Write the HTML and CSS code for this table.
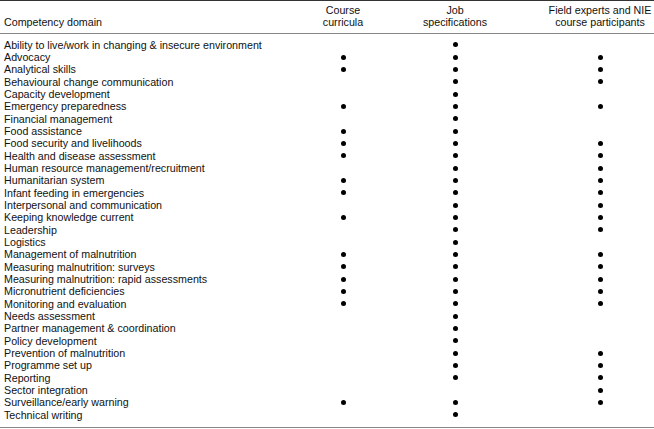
FILE: index.html
```html
<!DOCTYPE html>
<html>
<head>
<meta charset="utf-8">
<link rel="stylesheet" href="styles.css">
</head>
<body>
<div class="table">
  <div class="head">
    <div class="cell domain bottom">Competency domain</div>
    <div class="cell col c1">Course<br>curricula</div>
    <div class="cell col c2">Job<br>specifications</div>
    <div class="cell col c3">Field experts and NIE<br>course participants</div>
  </div>
  <div class="body" id="body"></div>
</div>
<script src="app.js"></script>
</body>
</html>
```
FILE: app.js
```js
const rows = [
  ["Ability to live/work in changing & insecure environment", 0,1,0],
  ["Advocacy",1,1,1],
  ["Analytical skills",1,1,1],
  ["Behavioural change communication",0,1,1],
  ["Capacity development",0,1,0],
  ["Emergency preparedness",1,1,1],
  ["Financial management",0,1,0],
  ["Food assistance",1,1,0],
  ["Food security and livelihoods",1,1,1],
  ["Health and disease assessment",1,1,1],
  ["Human resource management/recruitment",0,1,1],
  ["Humanitarian system",1,1,1],
  ["Infant feeding in emergencies",1,1,1],
  ["Interpersonal and communication",0,1,1],
  ["Keeping knowledge current",1,1,1],
  ["Leadership",0,1,1],
  ["Logistics",0,1,0],
  ["Management of malnutrition",1,1,1],
  ["Measuring malnutrition: surveys",1,1,1],
  ["Measuring malnutrition: rapid assessments",1,1,1],
  ["Micronutrient deficiencies",1,1,1],
  ["Monitoring and evaluation",1,1,1],
  ["Needs assessment",0,1,0],
  ["Partner management & coordination",0,1,0],
  ["Policy development",0,1,0],
  ["Prevention of malnutrition",0,1,1],
  ["Programme set up",0,1,1],
  ["Reporting",0,1,1],
  ["Sector integration",0,0,1],
  ["Surveillance/early warning",1,1,1],
  ["Technical writing",0,1,0]
];
const body = document.getElementById('body');
for (const r of rows) {
  const row = document.createElement('div');
  row.className = 'row';
  const d = document.createElement('div');
  d.className = 'cell domain';
  d.textContent = r[0];
  row.appendChild(d);
  for (let i = 1; i <= 3; i++) {
    const c = document.createElement('div');
    c.className = 'cell col c' + i;
    if (r[i]) {
      const dot = document.createElement('span');
      dot.className = 'dot';
      c.appendChild(dot);
    }
    row.appendChild(c);
  }
  body.appendChild(row);
}
```
FILE: styles.css
```css
html, body {
  margin: 0;
  padding: 0;
  background: #fff;
}
body {
  font-family: "Liberation Sans", Arial, sans-serif;
  font-size: 10.7px;
  line-height: 12.33px;
  color: #111;
}
.table {
  width: 654px;
  border-top: 1px solid #333;
}
.head, .row {
  display: grid;
  grid-template-columns: 300px 86px 138px 130px;
}
.head {
  padding: 3px 0 4px;
  border-bottom: 1px solid #888;
}
.body {
  padding: 5px 0 6px;
  border-bottom: 1px solid #888;
}
.domain {
  padding-left: 4px;
  white-space: nowrap;
}
.bottom {
  align-self: end;
}
.col {
  text-align: center;
  display: flex;
  flex-direction: column;
  align-items: center;
  justify-content: center;
}
.head .col {
  display: block;
}
.c3 {
  padding-left: 22px;
}
.dot {
  display: block;
  width: 5px;
  height: 5px;
  border-radius: 50%;
  background: #000;
}
```
